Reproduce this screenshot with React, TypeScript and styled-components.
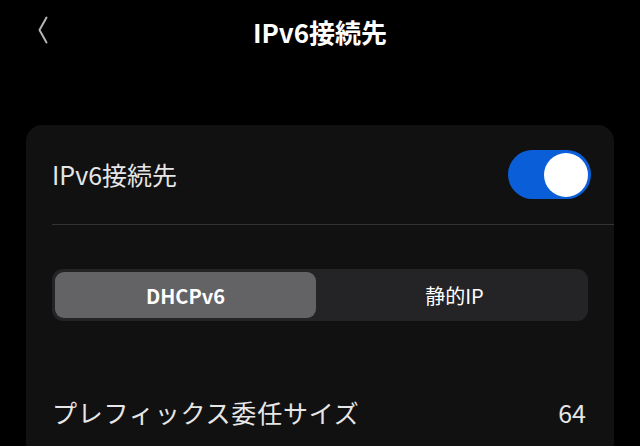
import React, { useState } from "react";
import styled, { createGlobalStyle } from "styled-components";

const Global = createGlobalStyle`
  html, body { margin: 0; padding: 0; background: #000; }
  body {
    width: 640px; height: 446px; overflow: hidden;
    font-family: "Noto Sans CJK JP", "Noto Sans", sans-serif;
    -webkit-font-smoothing: antialiased;
  }
`;

const Screen = styled.div`
  width: 640px;
  height: 446px;
  background: #000;
  display: flex;
  flex-direction: column;
  overflow: hidden;
`;

const Header = styled.header`
  height: 64px;
  flex-shrink: 0;
  display: grid;
  grid-template-columns: 1fr auto 1fr;
  align-items: center;
`;

const BackButton = styled.button`
  justify-self: start;
  margin-left: 34px;
  margin-top: -4px;
  padding: 0 4px;
  background: none;
  border: none;
  display: flex;
  align-items: center;
  cursor: pointer;
`;

const Title = styled.h1`
  margin: 0;
  font-size: 26px;
  font-weight: 700;
  color: #fff;
  line-height: 1;
`;

const Card = styled.section`
  margin: 61px 26px 0;
  background: #111111;
  border-radius: 16px 16px 0 0;
  padding-left: 26px;
  flex: 1;
  min-height: 0;
  overflow: hidden;
  display: flex;
  flex-direction: column;
`;

const Row = styled.div<{ $height: number; $right: number; $top?: number }>`
  height: ${(p) => p.$height}px;
  margin-top: ${(p) => p.$top ?? 0}px;
  padding-right: ${(p) => p.$right}px;
  display: flex;
  align-items: center;
  justify-content: space-between;
  flex-shrink: 0;
`;

const Label = styled.span<{ $spacing?: number }>`
  font-size: 25px;
  color: #e6e6e6;
  line-height: 1;
  letter-spacing: ${(p) => p.$spacing ?? 0}px;
`;

const Value = styled.span`
  font-size: 25px;
  color: #e6e6e6;
  line-height: 1;
`;

const Divider = styled.div`
  height: 1px;
  background: #333333;
  flex-shrink: 0;
`;

const Switch = styled.button<{ $on: boolean }>`
  width: 83px;
  height: 49px;
  border-radius: 25px;
  border: none;
  padding: 0 3px;
  background: ${(p) => (p.$on ? "#0a5fd8" : "#3a3a3c")};
  display: flex;
  align-items: center;
  justify-content: ${(p) => (p.$on ? "flex-end" : "flex-start")};
  cursor: pointer;
`;

const Knob = styled.span`
  width: 44px;
  height: 44px;
  border-radius: 50%;
  background: #fff;
`;

const Segmented = styled.div`
  margin: 44px 26px 0 0;
  height: 52px;
  box-sizing: border-box;
  padding: 3px;
  background: #242426;
  border-radius: 11px;
  display: grid;
  grid-template-columns: 1fr 1fr;
  gap: 8px;
  flex-shrink: 0;
`;

const Segment = styled.button<{ $active: boolean }>`
  border: none;
  border-radius: 9px;
  background: ${(p) => (p.$active ? "#636366" : "transparent")};
  color: #fff;
  font-family: inherit;
  font-size: 20px;
  font-weight: ${(p) => (p.$active ? 700 : 400)};
  display: flex;
  align-items: center;
  justify-content: center;
  cursor: pointer;
`;

export default function App() {
  const [on, setOn] = useState(true);
  const [mode, setMode] = useState<"dhcp" | "static">("dhcp");
  return (
    <Screen>
      <Global />
      <Header>
        <BackButton aria-label="戻る">
          <svg width="10" height="28" viewBox="0 0 10 28" fill="none">
            <path d="M8.5 1.5 L1.5 14 L8.5 26.5" stroke="#b4b4b4" strokeWidth="2" strokeLinecap="round" strokeLinejoin="round" />
          </svg>
        </BackButton>
        <Title>IPv6接続先</Title>
        <span />
      </Header>
      <Card>
        <Row $height={99} $right={23}>
          <Label>IPv6接続先</Label>
          <Switch $on={on} onClick={() => setOn(!on)} aria-label="IPv6接続先">
            <Knob />
          </Switch>
        </Row>
        <Divider />
        <Segmented>
          <Segment $active={mode === "dhcp"} onClick={() => setMode("dhcp")}>DHCPv6</Segment>
          <Segment $active={mode === "static"} onClick={() => setMode("static")}>静的IP</Segment>
        </Segmented>
        <Row $height={100} $right={28} $top={41}>
          <Label $spacing={0.8}>プレフィックス委任サイズ</Label>
          <Value>64</Value>
        </Row>
      </Card>
    </Screen>
  );
}
